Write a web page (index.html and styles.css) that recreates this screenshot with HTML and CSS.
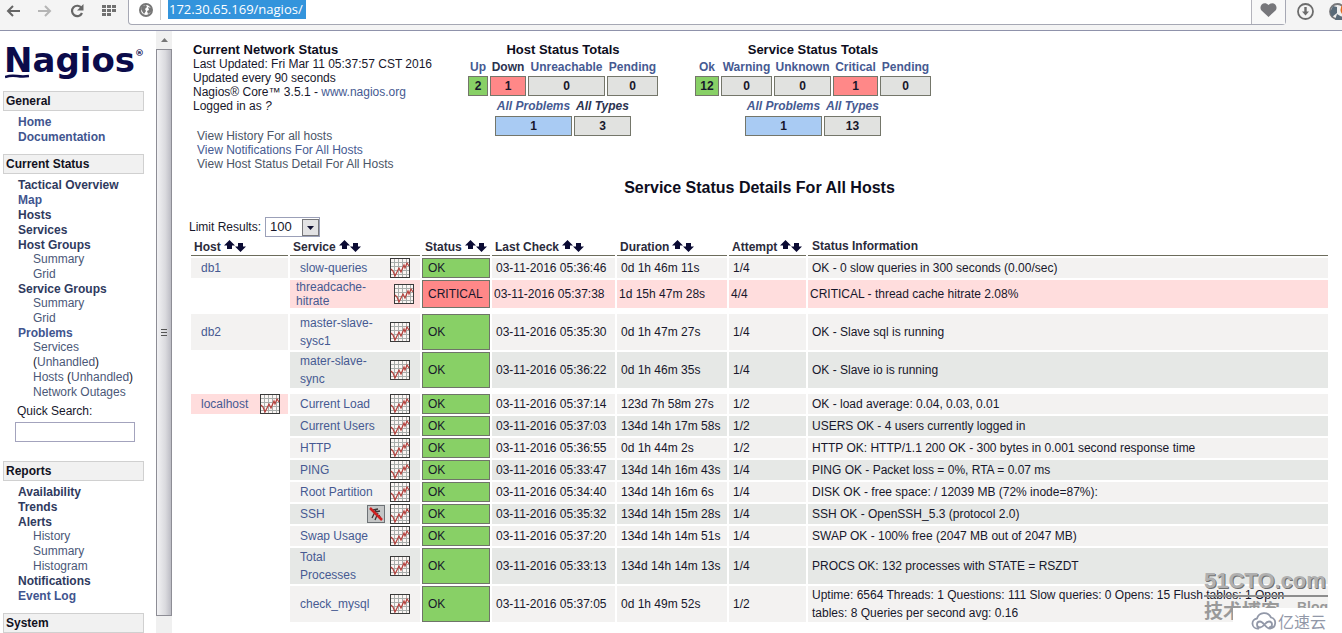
FILE: index.html
```html
<!DOCTYPE html>
<html lang="en">
<head>
<meta charset="utf-8">
<title>Nagios Core</title>
<link rel="stylesheet" href="styles.css">
</head>
<body>
<svg class="defs" aria-hidden="true">
  <symbol id="graph" viewBox="0 0 20 20">
    <rect x=".5" y=".5" width="19" height="19" fill="#fbf6f4" stroke="#3a3a3a"/>
    <path d="M4.500 1v18M8.500 1v18M12.500 1v18M16.500 1v18M1 4.500h18M1 8.500h18M1 12.500h18M1 16.500h18" stroke="#a9adab" fill="none"/>
    <path d="M1 11l2 2 2 5 4-8 2 4 3-7 1 3 2-5 2 3" stroke="#b5403c" stroke-width="1.200" fill="none"/>
  </symbol>
  <symbol id="sort" viewBox="0 0 22 12">
    <path d="M5.500 0L11 5.500H8V9H3V5.500H0zM16.500 12L11 6.500h3V3h5v3.500h3z" fill="#0b0b33"/>
  </symbol>
  <symbol id="muted" viewBox="0 0 18 18">
    <rect x=".5" y=".5" width="17" height="17" fill="#c4c6c6" stroke="#6d7276"/>
    <path d="M6 5l5-1M8 7l5-1M9 5l-4 8M11 8l-3 7M12 10l2 4" stroke="#3d3535" stroke-width="1.300" fill="none"/>
    <path d="M3 3l12 12" stroke="#cf2020" stroke-width="2.500"/>
  </symbol>
</svg>

<header class="toolbar">
  <button class="tool" aria-label="Back"><svg width="14" height="12" viewBox="0 0 14 12"><path d="M14 6H2M7 1L2 6l5 5" fill="none" stroke="#666" stroke-width="2"/></svg></button>
  <button class="tool" aria-label="Forward"><svg width="14" height="12" viewBox="0 0 14 12"><path d="M0 6h12M7 1l5 5-5 5" fill="none" stroke="#b5b5b5" stroke-width="2"/></svg></button>
  <button class="tool" aria-label="Reload"><svg width="14" height="14" viewBox="0 0 14 14"><path d="M11.500 4A5.200 5.200 0 1 0 12 9" fill="none" stroke="#666" stroke-width="2.200"/><path d="M13.500 0v6.500H7z" fill="#666"/></svg></button>
  <button class="tool" aria-label="Speed dial"><svg width="15" height="12" viewBox="0 0 15 12"><path d="M0 0h4v3H0zM5 0h4v3H5zM10 0h4v3h-4zM0 4h4v3H0zM5 4h4v3H5zM10 4h4v3h-4zM0 8h4v3H0zM5 8h4v3H5z" fill="#707070"/></svg></button>
  <div class="address">
    <svg class="globe" width="14" height="14" viewBox="0 0 14 14"><circle cx="7" cy="7" r="6" fill="#fff" stroke="#777" stroke-width="2"/><path d="M3 3l4-1 1 2-2 2 1 2-2 3-2-3-1-2zM9 4l3 1v4l-3 2-1-3 2-1z" fill="#777"/></svg>
    <label class="url"><input type="text" value="172.30.65.169/nagios/" size="1" aria-label="Address"></label>
    <button class="heart" aria-label="Bookmark"><svg width="17" height="14" viewBox="0 0 17 14"><path d="M8.500 14L1.500 7.500C-2 3 4-2.500 8.500 2c4.500-4.500 10.500 1 7 5.500z" fill="#77777b"/></svg></button>
  </div>
  <button class="tool down" aria-label="Downloads"><svg width="17" height="17" viewBox="0 0 17 17"><circle cx="8.500" cy="8.500" r="7.500" fill="none" stroke="#6c6c6c" stroke-width="1.800"/><path d="M7.300 4h2.400v4.500H12L8.500 12.500 5 8.500h2.300z" fill="#6c6c6c"/></svg></button>
  <button class="tool user" aria-label="Account"><svg width="13" height="17" viewBox="0 0 13 17"><circle cx="8.500" cy="8.500" r="7.500" fill="#eee" stroke="#77777a" stroke-width="1.800"/><path d="M4 3l4 1v6l-5 4-2-5zM8 11l5 3v3H6z" fill="#596a78"/><path d="M13 2v9q-3-4 0-9z" fill="#e26b1e"/></svg></button>
</header>

<div class="frames">
  <nav class="side">
    <div class="logo">Nagios<sup>®</sup>
      <svg class="swash" width="24" height="5" viewBox="0 0 24 5"><path d="M0 3q6-2 12-1t12 0" fill="none" stroke="#0b0b4a" stroke-width="2.500"/></svg>
    </div>

    <h2>General</h2>
    <ul>
      <li><a class="blue" href="#">Home</a></li>
      <li><a class="blue" href="#">Documentation</a></li>
    </ul>

    <h2>Current Status</h2>
    <ul>
      <li><a href="#">Tactical Overview</a></li>
      <li><a class="blue" href="#">Map</a></li>
      <li><a href="#">Hosts</a></li>
      <li><a href="#">Services</a></li>
      <li class="group"><a href="#">Host Groups</a></li>
      <li class="sub"><a href="#">Summary</a></li>
      <li class="sub"><a href="#">Grid</a></li>
      <li class="group"><a href="#">Service Groups</a></li>
      <li class="sub"><a href="#">Summary</a></li>
      <li class="sub"><a href="#">Grid</a></li>
      <li class="group"><a class="blue" href="#">Problems</a></li>
      <li class="sub"><a href="#">Services</a><br>(<a href="#">Unhandled</a>)</li>
      <li class="sub"><a href="#">Hosts</a> (<a href="#">Unhandled</a>)</li>
      <li class="sub"><a href="#">Network Outages</a></li>
    </ul>
    <form class="search">
      <label for="q">Quick Search:</label>
      <input id="q" type="text" size="1">
    </form>

    <h2>Reports</h2>
    <ul>
      <li><a href="#">Availability</a></li>
      <li><a href="#">Trends</a></li>
      <li class="group"><a href="#">Alerts</a></li>
      <li class="sub"><a href="#">History</a></li>
      <li class="sub"><a href="#">Summary</a></li>
      <li class="sub"><a href="#">Histogram</a></li>
      <li><a href="#">Notifications</a></li>
      <li><a class="blue" href="#">Event Log</a></li>
    </ul>

    <h2>System</h2>
  </nav>

  <div class="scroll" aria-hidden="true">
    <div class="up"><svg width="7" height="4" viewBox="0 0 7 4"><path d="M3.500 0L7 4H0z" fill="#777"/></svg></div>
    <div class="thumb"><svg width="6" height="8" viewBox="0 0 6 8"><path d="M0 .5h6M0 3.500h6M0 6.500h6" stroke="#555"/></svg></div>
  </div>

  <main>
    <div class="summary">
      <section class="info">
        <h3>Current Network Status</h3>
        <p>Last Updated: Fri Mar 11 05:37:57 CST 2016</p>
        <p>Updated every 90 seconds</p>
        <p>Nagios® Core™ 3.5.1 - <a href="#">www.nagios.org</a></p>
        <p>Logged in as <i>?</i></p>
        <div class="views">
          <a class="seen" href="#">View History For all hosts</a>
          <a href="#">View Notifications For All Hosts</a>
          <a class="seen" href="#">View Host Status Detail For All Hosts</a>
        </div>
      </section>

      <section class="totals hosts">
        <h3>Host Status Totals</h3>
        <table>
          <tr><th><a href="#">Up</a></th><th><a class="dark" href="#">Down</a></th><th><a href="#">Unreachable</a></th><th><a href="#">Pending</a></th></tr>
          <tr><td class="c20 ok">2</td><td class="c36 crit">1</td><td class="c77">0</td><td class="c50">0</td></tr>
        </table>
        <table class="all">
          <tr><th><a href="#">All Problems</a></th><th><a class="dark" href="#">All Types</a></th></tr>
          <tr><td class="c77 prob">1</td><td class="c57">3</td></tr>
        </table>
      </section>

      <section class="totals">
        <h3>Service Status Totals</h3>
        <table>
          <tr><th><a href="#">Ok</a></th><th><a href="#">Warning</a></th><th><a href="#">Unknown</a></th><th><a href="#">Critical</a></th><th><a href="#">Pending</a></th></tr>
          <tr><td class="c24 ok">12</td><td class="c50">0</td><td class="c57">0</td><td class="c45 crit">1</td><td class="c50">0</td></tr>
        </table>
        <table class="all">
          <tr><th><a href="#">All Problems</a></th><th><a href="#">All Types</a></th></tr>
          <tr><td class="c77 prob">1</td><td class="c57">13</td></tr>
        </table>
      </section>
    </div>

    <h1>Service Status Details For All Hosts</h1>

    <form class="limit">
      <label for="limit">Limit Results:</label>
      <span class="pick">
        <select id="limit"><option>100</option></select>
        <svg width="17" height="17" viewBox="0 0 17 17"><rect x=".5" y=".5" width="16" height="16" fill="#e2e2e4" stroke="#77777b"/><path d="M5 7h7l-3.500 4z" fill="#111133"/></svg>
      </span>
    </form>

    <table class="status">
      <colgroup><col class="w-host"><col class="w-svc"><col class="w-stat"><col class="w-last"><col class="w-dur"><col class="w-att"><col></colgroup>
      <thead>
        <tr>
          <th>Host<svg class="sort"><use href="#sort"/></svg></th>
          <th>Service<svg class="sort"><use href="#sort"/></svg></th>
          <th>Status<svg class="sort"><use href="#sort"/></svg></th>
          <th>Last Check<svg class="sort"><use href="#sort"/></svg></th>
          <th>Duration<svg class="sort"><use href="#sort"/></svg></th>
          <th>Attempt<svg class="sort"><use href="#sort"/></svg></th>
          <th class="plain">Status Information</th>
        </tr>
      </thead>
      <tbody>
        <tr class="odd"><td class="name"><div><a href="#">db1</a></div></td><td class="name"><div><a href="#">slow-queries</a><svg class="graph"><use href="#graph"/></svg></div></td><td class="st">OK</td><td>03-11-2016 05:36:46</td><td>0d 1h 46m 11s</td><td>1/4</td><td>OK - 0 slow queries in 300 seconds (0.00/sec)</td></tr>
        <tr class="bad"><td class="none"></td><td class="name"><div><a href="#">threadcache-hitrate</a><svg class="graph"><use href="#graph"/></svg></div></td><td class="st">CRITICAL</td><td>03-11-2016 05:37:38</td><td>1d 15h 47m 28s</td><td>4/4</td><td>CRITICAL - thread cache hitrate 2.08%</td></tr>
        <tr class="sep"><td class="none" colspan="7"></td></tr>
        <tr class="odd"><td class="name"><div><a href="#">db2</a></div></td><td class="name"><div><a href="#">master-slave-sysc1</a><svg class="graph"><use href="#graph"/></svg></div></td><td class="st">OK</td><td>03-11-2016 05:35:30</td><td>0d 1h 47m 27s</td><td>1/4</td><td>OK - Slave sql is running</td></tr>
        <tr class="even"><td class="none"></td><td class="name"><div><a href="#">mater-slave-sync</a><svg class="graph"><use href="#graph"/></svg></div></td><td class="st">OK</td><td>03-11-2016 05:36:22</td><td>0d 1h 46m 35s</td><td>1/4</td><td>OK - Slave io is running</td></tr>
        <tr class="sep"><td class="none" colspan="7"></td></tr>
        <tr class="odd"><td class="name down-host"><div><a href="#">localhost</a><svg class="graph"><use href="#graph"/></svg></div></td><td class="name"><div><a href="#">Current Load</a><svg class="graph"><use href="#graph"/></svg></div></td><td class="st">OK</td><td>03-11-2016 05:37:14</td><td>123d 7h 58m 27s</td><td>1/2</td><td>OK - load average: 0.04, 0.03, 0.01</td></tr>
        <tr class="even"><td class="none"></td><td class="name"><div><a href="#">Current Users</a><svg class="graph"><use href="#graph"/></svg></div></td><td class="st">OK</td><td>03-11-2016 05:37:03</td><td>134d 14h 17m 58s</td><td>1/2</td><td>USERS OK - 4 users currently logged in</td></tr>
        <tr class="odd"><td class="none"></td><td class="name"><div><a href="#">HTTP</a><svg class="graph"><use href="#graph"/></svg></div></td><td class="st">OK</td><td>03-11-2016 05:36:55</td><td>0d 1h 44m 2s</td><td>1/2</td><td>HTTP OK: HTTP/1.1 200 OK - 300 bytes in 0.001 second response time</td></tr>
        <tr class="even"><td class="none"></td><td class="name"><div><a href="#">PING</a><svg class="graph"><use href="#graph"/></svg></div></td><td class="st">OK</td><td>03-11-2016 05:33:47</td><td>134d 14h 16m 43s</td><td>1/4</td><td>PING OK - Packet loss = 0%, RTA = 0.07 ms</td></tr>
        <tr class="odd"><td class="none"></td><td class="name"><div><a href="#">Root Partition</a><svg class="graph"><use href="#graph"/></svg></div></td><td class="st">OK</td><td>03-11-2016 05:34:40</td><td>134d 14h 16m 6s</td><td>1/4</td><td>DISK OK - free space: / 12039 MB (72% inode=87%):</td></tr>
        <tr class="even"><td class="none"></td><td class="name"><div><a href="#">SSH</a><svg class="muted"><use href="#muted"/></svg><svg class="graph"><use href="#graph"/></svg></div></td><td class="st">OK</td><td>03-11-2016 05:35:32</td><td>134d 14h 15m 28s</td><td>1/4</td><td>SSH OK - OpenSSH_5.3 (protocol 2.0)</td></tr>
        <tr class="odd"><td class="none"></td><td class="name"><div><a href="#">Swap Usage</a><svg class="graph"><use href="#graph"/></svg></div></td><td class="st">OK</td><td>03-11-2016 05:37:20</td><td>134d 14h 14m 51s</td><td>1/4</td><td>SWAP OK - 100% free (2047 MB out of 2047 MB)</td></tr>
        <tr class="even"><td class="none"></td><td class="name"><div><a href="#">Total Processes</a><svg class="graph"><use href="#graph"/></svg></div></td><td class="st">OK</td><td>03-11-2016 05:33:13</td><td>134d 14h 14m 13s</td><td>1/4</td><td>PROCS OK: 132 processes with STATE = RSZDT</td></tr>
        <tr class="odd"><td class="none"></td><td class="name"><div><a href="#">check_mysql</a><svg class="graph"><use href="#graph"/></svg></div></td><td class="st">OK</td><td>03-11-2016 05:37:05</td><td>0d 1h 49m 52s</td><td>1/2</td><td class="wide">Uptime: 6564 Threads: 1 Questions: 111 Slow queries: 0 Opens: 15 Flush tables: 1 Open tables: 8 Queries per second avg: 0.16</td></tr>
      </tbody>
    </table>
  </main>
</div>

<div class="mark">
  <div class="site">51CTO.com</div>
  <div class="tag"><span>技术博客</span><span class="blog">Blog</span></div>
  <div class="cloud">
    <svg width="26" height="18" viewBox="0 0 26 18"><path d="M8 16.500H7a5 5 0 0 1-1-10 7.500 7.500 0 0 1 14-1 5.600 5.600 0 0 1-1 11c-5 0-6-7-10-7-4 0-4 6 0 6 4 0 5-6 9-6s4 6 0 6" fill="none" stroke="#9298a8" stroke-width="1.800"/></svg>
    <span>亿速云</span>
  </div>
</div>
</body>
</html>
```
FILE: styles.css
```css
* { box-sizing: border-box; }
body {
  margin: 0;
  height: 100vh;
  display: flex;
  flex-direction: column;
  overflow: hidden;
  position: relative;
  background: #fff;
  color: #17172b;
  font: 12px/14px "Liberation Sans", Arial, sans-serif;
}
a { color: #465a92; text-decoration: none; }
h1, h2, h3, p, ul { margin: 0; padding: 0; }
button { border: 0; background: none; padding: 0; }
.defs { position: absolute; width: 0; height: 0; }

.toolbar {
  flex: none;
  display: flex;
  height: 31px;
  padding-left: 4px;
  background: #f4f4f4;
  border-bottom: 1px solid #8f92ab;
}
.tool {
  width: 32px;
  height: 22px;
  display: flex;
  align-items: center;
  justify-content: flex-start;
  padding-left: 2px;
}
.address {
  flex: 1;
  height: 25px;
  display: flex;
  margin-left: -4px;
  background: #fff;
  border: 1px solid #a6a8b4;
  border-top: 0;
  border-radius: 0 0 4px 4px;
}
.globe { margin: 3px 7px 0 10px; }
.url {
  flex: 1;
  height: 20px;
  border-left: 1px solid #ccc;
  padding-left: 7px;
}
.url input {
  width: 138px;
  height: 19px;
  padding: 0 0 0 1px;
  border: 0;
  background: #3394dc;
  color: #fff;
  font: 13px/19px "Open Sans", sans-serif;
}
.heart {
  width: 34px;
  border-left: 1px solid #b4b4bc;
  background: #f8f8f8;
  padding-bottom: 2px;
}
.down { width: 32px; padding-left: 11px; }
.user { width: 24px; padding-left: 11px; }

.frames { flex: 1; min-height: 0; display: flex; }
.side { flex: none; width: 156px; padding: 12px 12px 0 3px; overflow: hidden; }
.logo {
  position: relative;
  height: 48px;
  margin-left: 1px;
  color: #0b0b4a;
  font: bold 34px/34px "DejaVu Sans", sans-serif;
  white-space: nowrap;
}
.logo sup { font-size: 9px; line-height: 9px; vertical-align: 16px; }
.swash { position: absolute; left: 1px; top: 31px; }
.side h2 {
  height: 20px;
  padding-left: 2px;
  border: 1px solid #d0d0d0;
  background: #f1f1f1;
  color: #111122;
  font-size: 12px;
  line-height: 18px;
}
.side ul { list-style: none; padding: 4px 0 9px 15px; }
.side li { line-height: 15px; font-weight: bold; white-space: nowrap; }
.side li a { color: #2f3a5e; }
.side li a.blue { color: #41558f; }
.side .group { line-height: 14px; }
.side .sub { padding-left: 15px; font-weight: normal; }
.side .sub a { color: #4b5878; }
.search { display: flex; flex-direction: column; gap: 4px; padding: 0 9px 19px 12px; margin-top: -5px; }
.search label { padding-left: 2px; }
.search input { width: 100%; height: 20px; border: 1px solid #a3a3bd; background: #fff; }

.scroll { flex: none; width: 16px; background: #f0f0f0; padding-bottom: 17px; display: flex; flex-direction: column; }
.up { height: 18px; display: flex; align-items: center; justify-content: center; }
.thumb {
  flex: 1;
  display: flex;
  align-items: center;
  justify-content: center;
  border: 1px solid #8d8d95;
  background: linear-gradient(90deg, #f2f2f4, #dadade 60%, #bcbcc4);
}

main { flex: 1; min-width: 0; padding: 12px 12px 0 17px; overflow: hidden; }
.summary { display: flex; height: 137px; padding-left: 4px; }
.info { width: 273px; flex: none; white-space: nowrap; }
h3 { color: #0d0d20; font-size: 13px; line-height: 14px; }
.views { display: flex; flex-direction: column; padding: 16px 0 0 4px; }
.views .seen { color: #4b5566; }
.totals { flex: none; display: flex; flex-direction: column; align-items: center; text-align: center; }
.totals.hosts { margin-right: 33px; }
.totals table { border-spacing: 2px; }
.totals .all { margin-top: -2px; }
.totals th { height: 15px; padding: 0; line-height: 14px; }
.totals .all th { height: 16px; font-style: italic; }
.totals a.dark { color: #2b3350; }
.totals td {
  height: 20px;
  padding: 0;
  border: 1px solid #74766a;
  background: #e1e2e0;
  font-weight: bold;
}
.totals td.ok { background: #88d066; }
.totals td.crit { background: #ff8888; }
.totals td.prob { background: #a9cbf3; }
.c20 { width: 20px; } .c24 { width: 24px; } .c36 { width: 36px; } .c45 { width: 45px; }
.c50 { width: 51px; } .c57 { width: 57px; } .c77 { width: 77px; }

h1 { color: #0d0d20; font-size: 16px; line-height: 16px; text-align: center; }
.limit { display: flex; align-items: center; gap: 4px; height: 20px; margin-top: 21px; }
.pick { position: relative; width: 55px; height: 20px; }
.pick select {
  appearance: none;
  width: 100%;
  height: 20px;
  padding: 0 0 0 4px;
  border: 1px solid #9ba0b8;
  border-radius: 0;
  background: #fff;
  color: #17172b;
  font: 13px/16px "Liberation Sans", Arial, sans-serif;
}
.pick svg { position: absolute; right: 1px; top: 2px; pointer-events: none; }

.status { width: 100%; table-layout: fixed; border-spacing: 2px; }
.w-host { width: 97px; } .w-svc { width: 130px; } .w-stat { width: 68px; }
.w-last { width: 123px; } .w-dur { width: 110px; } .w-att { width: 77px; }
.status th {
  height: 17px;
  padding: 1px 0 0 3px;
  border-bottom: 1px solid #6c6c5c;
  color: #2b2b3b;
  text-align: left;
  line-height: 15px;
  white-space: nowrap;
}
.status th.plain { padding: 0 0 1px 4px; }
.sort { width: 22px; height: 12px; margin-left: 3px; vertical-align: top; }
.status td { height: 20px; padding: 0 4px; line-height: 18px; }
.odd td { background: #f3f2f1; }
.even td { background: #e6e8e6; }
.status .bad td { height: 28px; padding: 0 2px; background: #ffdddd; line-height: 14px; }
.status td.none { background: none; }
.status .sep td { height: 2px; padding: 0; }
.status td.name { padding: 0 10px; }
.status td.down-host { padding-right: 8px; background: #ffdddd; }
.status .bad td.name { padding: 0 6px; }
.status .bad td.none { background: none; }
.name div { display: flex; align-items: center; }
.name a { max-width: 80px; }
.name .graph { flex: none; width: 20px; height: 20px; margin-left: auto; }
.muted { flex: none; width: 18px; height: 18px; margin-left: auto; }
.name .muted + .graph { margin-left: 5px; }
.status td.st, .status .bad td.st { padding: 0 5px; border: 1px solid #6f7469; background: #88d066; line-height: 18px; }
.status .bad td.st { background: #ff8888; }
.status td.wide { padding-right: 24px; }

.mark { position: absolute; right: 0; bottom: 0; width: 138px; height: 66px; pointer-events: none; }
.site {
  width: 124px;
  border-bottom: 2px solid #8d8d8d;
  color: #b0b0b0;
  font: bold 22px/28px "Liberation Sans", Arial, sans-serif;
  text-shadow: 1px 1px 0 #707070;
}
.tag {
  display: flex;
  justify-content: space-between;
  width: 124px;
  padding-top: 2px;
  color: #999;
  font: bold 19px/22px "Noto Sans CJK SC", sans-serif;
}
.tag .blog { font: bold 14px/16px "Liberation Sans", Arial, sans-serif; }
.cloud {
  position: absolute;
  right: 0;
  bottom: 0;
  width: 109px;
  height: 25px;
  display: flex;
  align-items: center;
  gap: 1px;
  padding-left: 18px;
  background: #fff;
  color: #9298a8;
  font: 16px/20px "Noto Sans CJK SC", sans-serif;
}
```
